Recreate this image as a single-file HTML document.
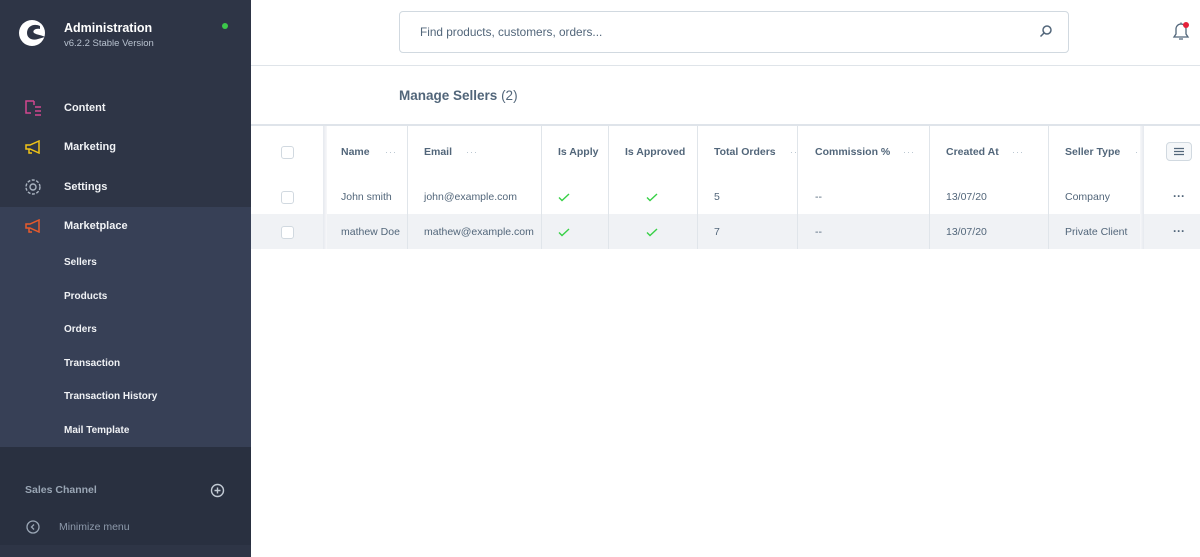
<!DOCTYPE html><html><head><style>
*{margin:0;padding:0;box-sizing:border-box}
body{width:1200px;height:557px;overflow:hidden;font-family:"Liberation Sans",sans-serif;background:#fff;position:relative}
.a{position:absolute}
#sb{left:0;top:0;width:251px;height:557px;background:#2e3546}
.nav{left:64px;color:#f0f2f5;font-size:11px;font-weight:bold}
.sub{left:64px;color:#f0f2f5;font-size:10px;font-weight:bold}
.th{top:146px;font-size:10.5px;font-weight:bold;color:#52667a}
.td{font-size:10.5px;color:#52667a}
.vl{top:126px;width:1px;height:123px;background:#e0e5ea}
.dots{font-size:9px;color:#b3bfcc;letter-spacing:1px}
.cb{left:281px;width:13px;height:13px;border:1px solid #d1d9e0;border-radius:3px;background:#fff}
.ck{width:12px;height:9px}
</style></head><body>
<div id="sb" class="a">
 <div class="a" style="left:0;top:207px;width:251px;height:240px;background:#374056"></div>
 <div class="a" style="left:0;top:447px;width:251px;height:110px;background:#293040"></div>
 <div class="a" style="left:0;top:545px;width:251px;height:12px;background:#2e3546"></div>
 <svg class="a" style="left:18px;top:18px" width="30" height="30" viewBox="0 0 30 30"><circle cx="14" cy="15" r="13" fill="#fff"/><path d="M22 8 C16 5 9 8 9 15 C9 20 14 23 20 21 L27 19 C24 17 19 17 16 15 C14 13 17 10 22 11Z" fill="#2e3546"/></svg>
 <div class="a" style="left:64px;top:21px;color:#fff;font-size:12.5px;font-weight:bold">Administration</div>
 <div class="a" style="left:64px;top:38px;color:#b8c2cf;font-size:9.5px">v6.2.2 Stable Version</div>
 <div class="a" style="left:222px;top:23px;width:6px;height:6px;border-radius:50%;background:#3cc84a"></div>
 <svg class="a" style="left:24px;top:99px" width="18" height="18" fill="none" stroke="#d2468f" stroke-width="1.5"><path d="M10 2H2v12h5M11 8h6M11 12h6M11 16h6M10 2v4"/></svg>
 <div class="a nav" style="top:102px">Content</div>
 <svg class="a" style="left:24px;top:140px" width="18" height="14" fill="none" stroke="#f0c417" stroke-width="1.5"><path d="M2 5h4l9-4v12l-9-4H2zM5 9v4h3"/></svg>
 <div class="a nav" style="top:141px">Marketing</div>
 <svg class="a" style="left:24px;top:178px" width="18" height="18" fill="none" stroke="#aab4c1" stroke-width="1.4"><circle cx="9" cy="9" r="3"/><circle cx="9" cy="9" r="7" stroke-dasharray="3 1.5"/></svg>
 <div class="a nav" style="top:181px">Settings</div>
 <svg class="a" style="left:24px;top:219px" width="18" height="14" fill="none" stroke="#e85a2b" stroke-width="1.5"><path d="M2 5h4l9-4v12l-9-4H2zM5 9v4h3"/></svg>
 <div class="a nav" style="top:220px">Marketplace</div>
 <div class="a sub" style="top:257px">Sellers</div>
 <div class="a sub" style="top:291px">Products</div>
 <div class="a sub" style="top:324px">Orders</div>
 <div class="a sub" style="top:358px">Transaction</div>
 <div class="a sub" style="top:391px">Transaction History</div>
 <div class="a sub" style="top:425px">Mail Template</div>
 <div class="a" style="left:25px;top:484px;color:#9aa6b5;font-size:10.5px;font-weight:bold">Sales Channel</div>
 <svg class="a" style="left:210px;top:483px" width="15" height="15" fill="none" stroke="#c2cad4" stroke-width="1.4"><circle cx="7.5" cy="7.5" r="6"/><path d="M7.5 4.5v6M4.5 7.5h6"/></svg>
 <svg class="a" style="left:26px;top:520px" width="14" height="14" fill="none" stroke="#9aa6b5" stroke-width="1.3"><circle cx="7" cy="7" r="6"/><path d="M8 4.5 5.5 7 8 9.5"/></svg>
 <div class="a" style="left:59px;top:521px;color:#8e9aab;font-size:10.5px">Minimize menu</div>
</div>
<div class="a" style="left:399px;top:11px;width:670px;height:42px;border:1px solid #d1d9e0;border-radius:4px"></div>
<div class="a" style="left:420px;top:25px;font-size:11.8px;color:#52667a">Find products, customers, orders...</div>
<svg class="a" style="left:1039px;top:24px" width="14" height="14" fill="none" stroke="#52667a" stroke-width="1.5"><circle cx="8" cy="6" r="4"/><path d="M5 9 1.5 12.5"/></svg>
<svg class="a" style="left:1171px;top:21px" width="20" height="22" fill="none" stroke="#52667a" stroke-width="1.3"><path d="M3 16h14l-2-3V8a5 5 0 0 0-10 0v5zM8 18h4M10 3V1.5"/><circle cx="15" cy="4" r="3" fill="#e5213a" stroke="none"/></svg>
<div class="a" style="left:251px;top:65px;width:949px;height:1px;background:#dfe4e9"></div>
<div class="a" style="left:399px;top:88px;font-size:13.5px;font-weight:bold;color:#52667a">Manage Sellers <span style="font-weight:normal">(2)</span></div>
<div class="a" style="left:251px;top:124px;width:949px;height:2px;background:#dfe4ea"></div>
<div class="a" style="left:251px;top:214px;width:949px;height:35px;background:#f0f2f5"></div>
<div class="a" style="left:323px;top:126px;width:4px;height:123px;background:linear-gradient(90deg,#e6e9ee,#f7f8fa)"></div>
<div class="a" style="left:1140px;top:126px;width:4px;height:123px;background:linear-gradient(90deg,#f7f8fa,#e6e9ee)"></div>
<div class="a vl" style="left:407px"></div><div class="a vl" style="left:541px"></div><div class="a vl" style="left:608px"></div><div class="a vl" style="left:697px"></div><div class="a vl" style="left:797px"></div><div class="a vl" style="left:929px"></div><div class="a vl" style="left:1048px"></div>
<div class="a cb" style="top:146px"></div><div class="a cb" style="top:191px"></div><div class="a cb" style="top:226px"></div>
<div class="a th" style="left:341px">Name</div><div class="a dots" style="left:385px;top:147px">···</div>
<div class="a th" style="left:424px">Email</div><div class="a dots" style="left:466px;top:147px">···</div>
<div class="a th" style="left:558px">Is Apply</div>
<div class="a th" style="left:625px">Is Approved</div>
<div class="a th" style="left:714px">Total Orders</div><div class="a dots" style="left:790px;top:147px">··</div>
<div class="a th" style="left:815px">Commission %</div><div class="a dots" style="left:903px;top:147px">···</div>
<div class="a th" style="left:946px">Created At</div><div class="a dots" style="left:1012px;top:147px">···</div>
<div class="a th" style="left:1065px">Seller Type</div><div class="a dots" style="left:1135px;top:147px">·</div>
<div class="a" style="left:1166px;top:142px;width:26px;height:19px;border:1px solid #d1d9e0;border-radius:4px;background:#f5f7f9"></div>
<svg class="a" style="left:1173px;top:147px" width="12" height="9" stroke="#52667a" stroke-width="1.2"><path d="M1 1.5h10M1 4.5h10M1 7.5h10"/></svg>
<div class="a td" style="left:341px;top:191px">John smith</div>
<div class="a td" style="left:424px;top:191px">john@example.com</div>
<svg class="a ck" style="left:558px;top:193px" fill="none" stroke="#37d046" stroke-width="1.4"><path d="M1 4.5 4 7.5 11 1"/></svg>
<svg class="a ck" style="left:646px;top:193px" fill="none" stroke="#37d046" stroke-width="1.4"><path d="M1 4.5 4 7.5 11 1"/></svg>
<div class="a td" style="left:714px;top:191px">5</div><div class="a td" style="left:815px;top:191px">--</div>
<div class="a td" style="left:946px;top:191px">13/07/20</div><div class="a td" style="left:1065px;top:191px">Company</div>
<div class="a" style="left:1173px;top:189px;font-size:12px;font-weight:bold;color:#52667a">···</div>
<div class="a td" style="left:341px;top:226px">mathew Doe</div>
<div class="a td" style="left:424px;top:226px">mathew@example.com</div>
<svg class="a ck" style="left:558px;top:228px" fill="none" stroke="#37d046" stroke-width="1.4"><path d="M1 4.5 4 7.5 11 1"/></svg>
<svg class="a ck" style="left:646px;top:228px" fill="none" stroke="#37d046" stroke-width="1.4"><path d="M1 4.5 4 7.5 11 1"/></svg>
<div class="a td" style="left:714px;top:226px">7</div><div class="a td" style="left:815px;top:226px">--</div>
<div class="a td" style="left:946px;top:226px">13/07/20</div><div class="a td" style="left:1065px;top:226px">Private Client</div>
<div class="a" style="left:1173px;top:224px;font-size:12px;font-weight:bold;color:#52667a">···</div>
</body></html>
